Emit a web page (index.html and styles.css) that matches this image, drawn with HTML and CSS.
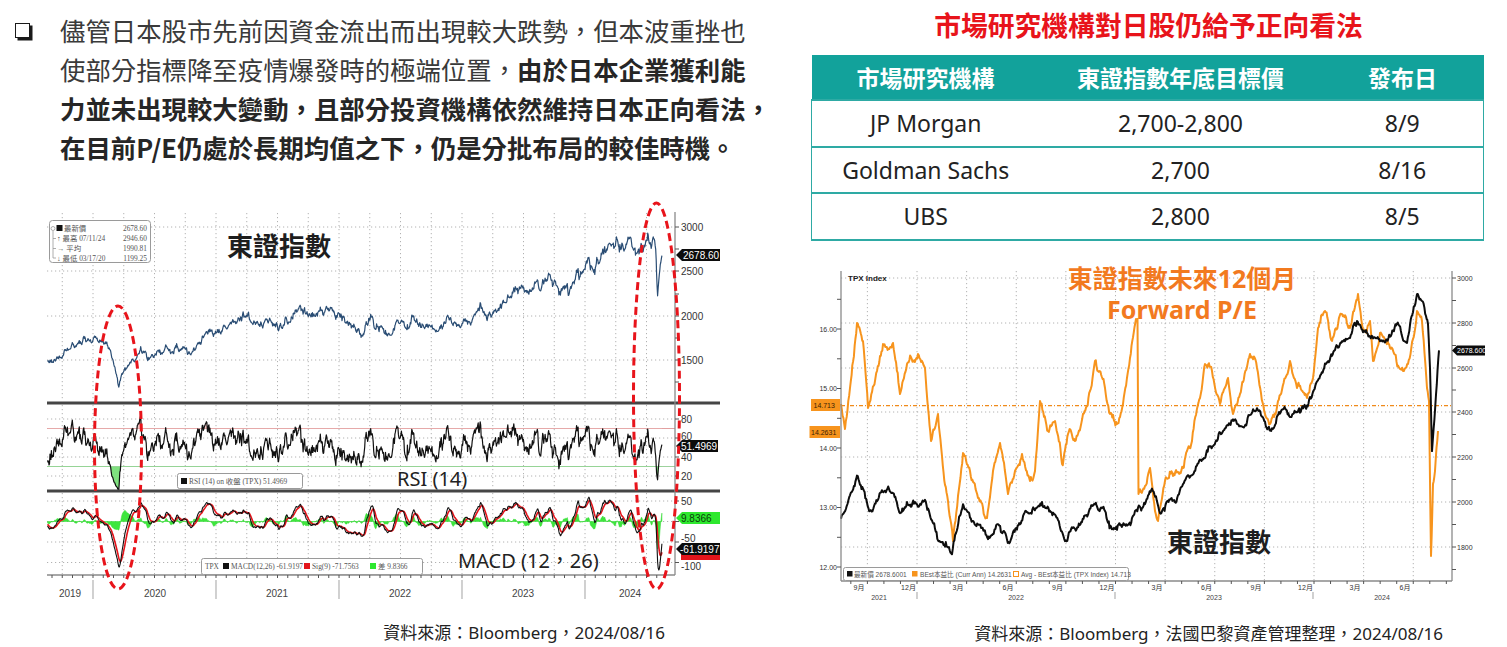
FILE: index.html
```html
<!DOCTYPE html>
<html lang="zh-Hant">
<head>
<meta charset="utf-8">
<title>日股觀點</title>
<link rel="stylesheet" href="styles.css">
</head>
<body>
<div class="page">
  <section class="col-left">
    <div class="bullet">
      <span class="checkbox"></span>
      <p class="bullet-text">儘管日本股市先前因資金流出而出現較大跌勢，但本波重挫也<br>使部分指標降至疫情爆發時的極端位置，<b>由於日本企業獲利能<br>力並未出現較大變動，且部分投資機構依然維持日本正向看法，<br>在目前P/E仍處於長期均值之下，仍是分批布局的較佳時機。</b></p>
    </div>

    <div class="chart-left">
      <svg class="svg-left" viewBox="40 198 685 404" xmlns="http://www.w3.org/2000/svg">
        <defs>
          <clipPath id="clipRsiLow"><rect x="47" y="466.5" width="628" height="23"/></clipPath>
          <clipPath id="clipRsiHigh"><rect x="47" y="406" width="628" height="22.5"/></clipPath>
        </defs>
        <g id="gridL"></g>
        <line class="ref-red" x1="47" x2="675" y1="428.5" y2="428.5"/>
        <line class="ref-green" x1="47" x2="675" y1="466.5" y2="466.5"/>
        <path id="rsiLow" class="fill-green" clip-path="url(#clipRsiLow)"/>
        <path id="rsiHigh" class="fill-red" clip-path="url(#clipRsiHigh)"/>
        <path id="macdHist" class="hist"/>
        <path id="priceL" class="line-price"/>
        <path id="rsiL" class="line-rsi"/>
        <path id="sigL" class="line-sig"/>
        <path id="macdL" class="line-macd"/>
        <line class="sep" x1="47" x2="720" y1="403" y2="403"/>
        <line class="sep" x1="47" x2="720" y1="491" y2="491"/>
        <line class="axis" x1="675" x2="675" y1="212" y2="575"/>
        <line class="axis" x1="47" x2="675" y1="575" y2="575"/>
        <g id="ticksL"></g>

        <g class="ax">
          <text x="681" y="230.5">3000</text>
          <text x="681" y="274.5">2500</text>
          <text x="681" y="319.5">2000</text>
          <text x="681" y="363.5">1500</text>
          <text x="681" y="422.5">80</text>
          <text x="681" y="440">60</text>
          <text x="681" y="460.5">40</text>
          <text x="681" y="479.5">20</text>
          <text x="681" y="504.5">50</text>
          <text x="681" y="541.5">-50</text>
          <text x="681" y="569.5">-100</text>
        </g>
        <g class="yr">
          <text x="70" y="597">2019</text>
          <text x="155" y="597">2020</text>
          <text x="277" y="597">2021</text>
          <text x="400" y="597">2022</text>
          <text x="523" y="597">2023</text>
          <text x="630" y="597">2024</text>
        </g>

        <g class="legend">
          <rect class="leg-box" x="49.5" y="220.5" width="101" height="42" rx="3"/>
          <path class="leg-tree" d="M53 231 V258 M53 238.5 H56 M53 248.5 H56 M53 258 H56"/>
          <circle class="leg-tree" cx="53" cy="228.5" r="2"/>
          <rect x="56.5" y="225" width="6" height="6" fill="#111"/>
          <text x="64" y="231">最新價</text><text class="num" x="147" y="231">2678.60</text>
          <text x="57" y="241">↑ 最高 07/11/24</text><text class="num" x="147" y="241">2946.60</text>
          <text x="57" y="251">→ 平均</text><text class="num" x="147" y="251">1990.81</text>
          <text x="57" y="261">↓ 最低 03/17/20</text><text class="num" x="147" y="261">1199.25</text>
        </g>

        <g class="legend">
          <rect class="leg-box" x="177.5" y="473.5" width="125" height="15" rx="2"/>
          <rect x="181" y="478" width="6" height="6" fill="#111"/>
          <text x="189" y="484">RSI (14)  on 收盤 (TPX) 51.4969</text>
        </g>
        <g class="legend">
          <rect class="leg-box" x="201.5" y="558.5" width="221" height="16" rx="2"/>
          <text x="205" y="569">TPX</text>
          <rect x="223" y="563" width="6" height="6" fill="#111"/>
          <text x="231" y="569">MACD(12,26) -61.9197</text>
          <rect x="304" y="563" width="6" height="6" fill="#e3141b"/>
          <text x="312" y="569">Sig(9) -71.7563</text>
          <rect x="370" y="563" width="6" height="6" fill="#2ee82e"/>
          <text x="378" y="569">差 9.8366</text>
        </g>

        <text class="big-label" x="227" y="256">東證指數</text>
        <text class="mid-label" x="397" y="486">RSI (14)</text>
        <text class="mid-label" x="458" y="568">MACD (12，26)</text>

        <path class="tag-black" d="M676 255 L682 249 H720 V261 H682 Z"/>
        <text class="tag-text" x="683" y="258.7">2678.60</text>
        <path class="tag-black" d="M676 446 L682 440 H718 V452 H682 Z"/>
        <text class="tag-text" x="681" y="449.7">51.4969</text>
        <path class="tag-green" d="M676 518 L682 512 H720 V524 H682 Z"/>
        <text class="tag-text dark" x="681" y="521.7">9.8366</text>
        <rect x="681" y="553" width="39" height="7" fill="#e3141b"/>
        <path class="tag-black" d="M676 549 L682 543 H720 V555 H682 Z"/>
        <text class="tag-text" x="680" y="552.7">-61.9197</text>

        <ellipse class="ring" cx="118" cy="447.5" rx="23.5" ry="141.5"/>
        <ellipse class="ring" cx="656.5" cy="396" rx="23" ry="193"/>
      </svg>
    </div>

    <p class="source source-left">資料來源：Bloomberg，2024/08/16</p>
  </section>

  <section class="col-right">
    <h2 class="title">市場研究機構對日股仍給予正向看法</h2>
    <table class="targets">
      <colgroup><col class="c1"><col class="c2"><col class="c3"></colgroup>
      <thead>
        <tr><th>市場研究機構</th><th>東證指數年底目標價</th><th>發布日</th></tr>
      </thead>
      <tbody>
        <tr><td>JP Morgan</td><td>2,700-2,800</td><td>8/9</td></tr>
        <tr><td>Goldman Sachs</td><td>2,700</td><td>8/16</td></tr>
        <tr><td>UBS</td><td>2,800</td><td>8/5</td></tr>
      </tbody>
    </table>

    <div class="chart-right">
      <svg class="svg-right" viewBox="805 252 690 350" xmlns="http://www.w3.org/2000/svg">
        <g id="gridR"></g>
        <line class="avg" x1="841" x2="1452" y1="404.6" y2="404.6"/>
        <path id="peR" class="line-pe"/>
        <path id="pxR" class="line-px"/>
        <line class="axis" x1="841" x2="841" y1="270" y2="580"/>
        <line class="axis" x1="1452" x2="1452" y1="270" y2="580"/>
        <line class="axis" x1="841" x2="1452" y1="580" y2="580"/>
        <g id="ticksR"></g>

        <text class="tpx" x="848" y="280">TPX Index</text>

        <g class="axs end">
          <text x="837" y="330.5">16.00</text>
          <text x="837" y="389.5">15.00</text>
          <text x="837" y="449.5">14.00</text>
          <text x="837" y="508.5">13.00</text>
          <text x="837" y="568.5">12.00</text>
        </g>
        <g class="axs">
          <text x="1457" y="279.5">3000</text>
          <text x="1457" y="324.5">2800</text>
          <text x="1457" y="369.5">2600</text>
          <text x="1457" y="413.5">2400</text>
          <text x="1457" y="458.5">2200</text>
          <text x="1457" y="503.5">2000</text>
          <text x="1457" y="548.5">1800</text>
        </g>
        <g class="axs mid">
          <text x="859" y="589">9月</text>
          <text x="908.5" y="589">12月</text>
          <text x="958" y="589">3月</text>
          <text x="1008" y="589">6月</text>
          <text x="1057.5" y="589">9月</text>
          <text x="1107" y="589">12月</text>
          <text x="1157" y="589">3月</text>
          <text x="1206.5" y="589">6月</text>
          <text x="1256" y="589">9月</text>
          <text x="1305.5" y="589">12月</text>
          <text x="1355" y="589">3月</text>
          <text x="1405" y="589">6月</text>
        </g>
        <g class="axs mid yrs">
          <text x="879" y="598.5">2021</text>
          <text x="1016" y="598.5">2022</text>
          <text x="1214" y="598.5">2023</text>
          <text x="1382" y="598.5">2024</text>
        </g>

        <path class="tag-orange" d="M811 398 H840 V410 H811 Z"/>
        <text class="tag-small" x="813.5" y="406.5">14.713</text>
        <path class="tag-orange" d="M809.5 425 H840 V437 H809.5 Z"/>
        <text class="tag-small" x="811" y="433.5">14.2631</text>
        <path class="tag-black" d="M1452 349.5 L1457 344.5 H1485 V354.5 H1457 Z"/>
        <text class="tag-small light" x="1457" y="352.3">2678.600</text>

        <g class="legend lg-r">
          <rect class="leg-box" x="843.5" y="566.5" width="285" height="13" rx="2"/>
          <rect x="847" y="570" width="5.5" height="5.5" fill="#111"/>
          <text x="854" y="576">最新價 2678.6001</text>
          <rect x="912" y="570" width="5.5" height="5.5" fill="#f7941d"/>
          <text x="920" y="576">BEst本益比 (Curr Ann) 14.2631</text>
          <rect x="1013.5" y="570.5" width="5" height="5" fill="#fff" stroke="#f7941d"/>
          <text x="1021" y="576">Avg - BEst本益比 (TPX Index) 14.713</text>
        </g>

        <text class="pe-title" x="1182" y="286.5">東證指數未來12個月</text>
        <text class="pe-title" x="1182" y="318">Forward P/E</text>
        <text class="big-label" x="1167" y="551">東證指數</text>
      </svg>
    </div>

    <p class="source source-right">資料來源：Bloomberg，法國巴黎資產管理整理，2024/08/16</p>
  </section>
</div>
<script src="script.js"></script>
</body>
</html>
```

FILE: styles.css
```css
* { box-sizing: border-box; }
html, body { margin: 0; padding: 0; }
body {
  width: 1507px;
  height: 647px;
  overflow: hidden;
  background: #fff;
  color: #222;
  font-family: "Noto Sans", "Noto Sans CJK TC", sans-serif;
}
.page {
  display: grid;
  grid-template-columns: 790px 717px;
  height: 647px;
}
.col-left, .col-right { display: flex; flex-direction: column; }

/* bullet text */
.bullet { display: flex; align-items: flex-start; padding: 11px 0 0 15px; }
.checkbox {
  flex: none;
  width: 15px;
  height: 15px;
  margin: 12px 30px 0 0;
  border: 1.5px solid #1a1a1a;
  box-shadow: 2.5px 2.5px 0 #1a1a1a;
  background: #fff;
}
.bullet-text {
  margin: 0;
  font-family: "Noto Sans CJK TC", "Noto Sans", sans-serif;
  font-size: 25.4px;
  line-height: 39px;
  color: #3a3a3a;
  white-space: nowrap;
}
.bullet-text b { font-weight: 700; color: #262626; }

/* charts */
.chart-left { margin-top: 31px; }
.svg-left { display: block; width: 685px; height: 404px; margin-left: 40px; }
.chart-right { margin-top: 12px; }
.svg-right { display: block; width: 690px; height: 350px; margin-left: 15px; }

.dot { stroke: #a9a9a9; stroke-width: 0.9; stroke-dasharray: 1.2 2.8; fill: none; }
.sep { stroke: #454545; stroke-width: 3; }
.axis { stroke: #8a8a8a; stroke-width: 1.3; }
.tick { stroke: #555; stroke-width: 1; }
.ysep { stroke: #bdbdbd; stroke-width: 1.4; }
.ref-red { stroke: #e2a0a0; stroke-width: 1.2; }
.ref-green { stroke: #9ed19e; stroke-width: 1.2; }
.fill-green { fill: #7fe07f; stroke: none; }
.fill-red { fill: #f3c4c4; stroke: none; }
.hist { fill: #3ee63e; stroke: #2fd82f; stroke-width: 0.5; }
.line-price { fill: none; stroke: #2a4d74; stroke-width: 1.2; stroke-linejoin: round; }
.line-rsi { fill: none; stroke: #111; stroke-width: 1.2; stroke-linejoin: round; }
.line-sig { fill: none; stroke: #e3141b; stroke-width: 1.6; stroke-linejoin: round; }
.line-macd { fill: none; stroke: #111; stroke-width: 1.1; stroke-linejoin: round; }
.line-pe { fill: none; stroke: #f7941d; stroke-width: 2; stroke-linejoin: round; }
.line-px { fill: none; stroke: #0d0d0d; stroke-width: 2; stroke-linejoin: round; }
.avg { stroke: #f08a1a; stroke-width: 1.2; stroke-dasharray: 4 2 1 2; }
.ring { fill: none; stroke: #e8141b; stroke-width: 3; stroke-dasharray: 8 4.5; }

.ax text { font-family: "Liberation Sans", sans-serif; font-size: 10px; fill: #333; }
.yr text { font-family: "Liberation Sans", sans-serif; font-size: 10px; fill: #444; text-anchor: middle; }
.axs text { font-family: "Liberation Sans", "Noto Sans CJK TC", sans-serif; font-size: 7px; fill: #333; }
.axs.end text { text-anchor: end; }
.axs.mid text { text-anchor: middle; }
.axs.yrs text { fill: #444; }
.tpx { font-family: "Liberation Sans", sans-serif; font-size: 8px; font-weight: 700; fill: #222; }

.legend text { font-family: "Liberation Serif", "Noto Sans CJK TC", serif; font-size: 7.4px; fill: #555; }
.legend text.num { text-anchor: end; }
.lg-r text { font-size: 6.6px; font-family: "Liberation Sans", "Noto Sans CJK TC", sans-serif; }
.leg-box { fill: #fff; stroke: #9a9a9a; stroke-width: 1; }
.leg-tree { fill: none; stroke: #999; stroke-width: 0.8; }

.big-label { font-family: "Noto Sans CJK TC", sans-serif; font-size: 26px; font-weight: 700; fill: #1e1e1e; }
.mid-label { font-family: "Noto Sans", "Noto Sans CJK TC", sans-serif; font-size: 20px; fill: #222; }
.pe-title { font-family: "Noto Sans", "Noto Sans CJK TC", sans-serif; font-size: 25px; font-weight: 700; fill: #f27a1f; text-anchor: middle; }

.tag-black { fill: #0c0c0c; }
.tag-green { fill: #2ee82e; }
.tag-orange { fill: #f7941d; }
.tag-text { font-family: "Liberation Sans", sans-serif; font-size: 10px; fill: #fff; }
.tag-text.dark { fill: #0b3d0b; }
.tag-small { font-family: "Liberation Sans", sans-serif; font-size: 7px; fill: #3a2205; }
.tag-small.light { fill: #fff; }

/* right column */
.title {
  margin: 10px 0 0;
  font-family: "Noto Sans CJK TC", sans-serif;
  font-size: 26.8px;
  line-height: 30px;
  font-weight: 700;
  color: #e8141b;
  text-align: center;
}
.targets {
  margin: 15px 0 0 21px;
  width: 672px;
  border-collapse: collapse;
  table-layout: fixed;
  font-size: 23px;
}
.targets col.c1 { width: 228px; }
.targets col.c2 { width: 282px; }
.targets col.c3 { width: 162px; }
.targets th {
  height: 45px;
  padding: 0;
  background: #12a29b;
  color: #fff;
  font-family: "Noto Sans CJK TC", sans-serif;
  font-weight: 700;
}
.targets td {
  height: 46.5px;
  padding: 0;
  text-align: center;
  color: #222;
  border-top: 2px solid #2eaaa4;
}
.targets tr:last-child td { border-bottom: 2px solid #2eaaa4; }
.targets td:first-child { border-left: 1px solid #2eaaa4; }
.targets td:last-child { border-right: 1px solid #2eaaa4; }

.source {
  margin: 19px 0 0;
  font-family: "Noto Sans", "Noto Sans CJK TC", sans-serif;
  font-size: 17px;
  line-height: 24px;
  color: #222;
  text-align: right;
  white-space: nowrap;
}
.source-left { padding-right: 125px; }
.source-right { padding-right: 64px; }
```

FILE: script.js
```js
(function () {
  var NS = 'http://www.w3.org/2000/svg';
  function el(parent, tag, attrs) {
    var e = document.createElementNS(NS, tag);
    for (var k in attrs) e.setAttribute(k, attrs[k]);
    parent.appendChild(e);
    return e;
  }
  var seed = 20240816;
  function rand() {
    seed |= 0; seed = seed + 0x6D2B79F5 | 0;
    var t = Math.imul(seed ^ seed >>> 15, 1 | seed);
    t = t + Math.imul(t ^ t >>> 7, 61 | t) ^ t;
    return ((t ^ t >>> 14) >>> 0) / 4294967296;
  }
  function gauss() {
    var u = 0; while (u === 0) u = rand();
    return Math.sqrt(-2 * Math.log(u)) * Math.cos(2 * Math.PI * rand());
  }
  /* Brownian bridge through anchor points */
  function bridge(anchors, dx, sig) {
    var pts = [[anchors[0][0], anchors[0][1]]];
    for (var i = 0; i < anchors.length - 1; i++) {
      var a = anchors[i], b = anchors[i + 1];
      var n = Math.max(1, Math.round((b[0] - a[0]) / dx));
      var s = typeof sig === 'function' ? sig(a[1]) : sig;
      var w = [0];
      for (var k = 1; k <= n; k++) w.push(w[k - 1] + gauss() * s);
      for (k = 1; k <= n; k++) {
        var f = k / n;
        pts.push([a[0] + (b[0] - a[0]) * f, a[1] + (b[1] - a[1]) * f + w[k] - w[n] * f]);
      }
    }
    return pts;
  }
  function pathD(pts) {
    return 'M' + pts.map(function (p) { return p[0].toFixed(1) + ' ' + p[1].toFixed(1); }).join('L');
  }

  /* ---------------- left chart ---------------- */
  var gL = document.getElementById('gridL');
  [227, 271, 316, 360, 419, 438, 457, 476, 501, 521.5, 542, 562.5].forEach(function (y) {
    el(gL, 'line', { x1: 47, x2: 675, y1: y, y2: y, 'class': 'dot' });
  });
  for (var q = -1; q <= 18; q++) {
    var gx = 93 + q * 30.75;
    if (gx < 47 || gx > 675) continue;
    [[213, 401], [405, 489], [493, 575]].forEach(function (s) {
      el(gL, 'line', { x1: gx, x2: gx, y1: s[0], y2: s[1], 'class': 'dot' });
    });
  }
  var tL = document.getElementById('ticksL');
  [227, 249, 271, 294, 316, 338, 360, 382, 419, 438, 457, 476, 501, 521.5, 542, 562.5].forEach(function (y) {
    el(tL, 'line', { x1: 675, x2: 679, y1: y, y2: y, 'class': 'tick' });
  });
  for (var m = -5; m <= 55; m++) {
    var mx = 93 + m * 123 / 12;
    if (mx < 47 || mx > 675) continue;
    el(tL, 'line', { x1: mx, x2: mx, y1: 575, y2: 578, 'class': 'tick' });
  }
  [93, 216, 339, 462, 585].forEach(function (x) {
    el(tL, 'line', { x1: x, x2: x, y1: 580, y2: 599, 'class': 'ysep' });
  });

  function tx(t) { return 93 + (t - 2020) * 123; }
  function py(p) { return 316 - (p - 2000) * 0.089; }
  var LA = [
    [2019.10, 1600], [2019.20, 1610], [2019.30, 1620], [2019.42, 1550], [2019.50, 1570], [2019.58, 1560],
    [2019.63, 1500], [2019.67, 1480], [2019.72, 1520], [2019.80, 1620], [2019.88, 1690], [2019.95, 1720],
    [2020.00, 1730], [2020.05, 1700], [2020.10, 1710], [2020.14, 1620], [2020.17, 1450], [2020.21, 1200],
    [2020.23, 1330], [2020.26, 1420], [2020.30, 1480], [2020.36, 1560], [2020.42, 1600], [2020.47, 1540],
    [2020.55, 1570], [2020.62, 1620], [2020.70, 1600], [2020.78, 1600], [2020.86, 1700], [2020.93, 1800],
    [2021.00, 1810], [2021.08, 1870], [2021.14, 1950], [2021.20, 1990], [2021.28, 1940], [2021.36, 1900],
    [2021.44, 1960], [2021.52, 1900], [2021.60, 1930], [2021.68, 2110], [2021.74, 2050], [2021.80, 2000],
    [2021.88, 2040], [2021.97, 1990], [2022.02, 2000], [2022.08, 1900], [2022.18, 1760], [2022.25, 1950],
    [2022.33, 1880], [2022.45, 1840], [2022.52, 1930], [2022.60, 1990], [2022.68, 1900], [2022.76, 1860],
    [2022.88, 2000], [2022.96, 1900], [2023.05, 1940], [2023.14, 2060], [2023.20, 1970], [2023.28, 2040],
    [2023.36, 2150], [2023.45, 2310], [2023.52, 2280], [2023.58, 2310], [2023.66, 2400], [2023.72, 2430],
    [2023.80, 2235], [2023.90, 2380], [2024.00, 2520], [2024.12, 2610], [2024.18, 2740], [2024.23, 2820],
    [2024.28, 2720], [2024.39, 2760], [2024.46, 2800], [2024.51, 2930], [2024.55, 2860], [2024.575, 2750],
    [2024.59, 2227], [2024.60, 2400], [2024.625, 2678.6]
  ].map(function (a) { return [tx(a[0]), a[1]]; });
  var lp = bridge(LA, 0.5, function (p) { return p * 0.0115; });

  var rsi = [], macd = [], sig = [];
  var ag = 0, al = 0, e12 = lp[0][1], e26 = lp[0][1], s9 = 0;
  for (var i = 0; i < lp.length; i++) {
    var p = lp[i][1];
    if (i > 0) {
      var ch = p - lp[i - 1][1];
      var g = ch > 0 ? ch : 0, l = ch < 0 ? -ch : 0;
      if (i <= 14) { ag += g / 14; al += l / 14; } else { ag = (ag * 13 + g) / 14; al = (al * 13 + l) / 14; }
    }
    rsi.push(al === 0 ? 50 : 100 - 100 / (1 + ag / al));
    e12 += (p - e12) * 2 / 13;
    e26 += (p - e26) * 2 / 27;
    var mv = e12 - e26;
    s9 += (mv - s9) * 2 / 10;
    macd.push(mv); sig.push(s9);
  }
  var vis = [];
  for (i = 0; i < lp.length; i++) if (lp[i][0] >= 47) vis.push(i);
  function ry(r) { return 476 - (r - 20) * 0.95; }
  function my(v) { return 521.5 - v * 0.41; }
  document.getElementById('priceL').setAttribute('d', pathD(vis.map(function (j) { return [lp[j][0], py(lp[j][1])]; })));
  var rsiPts = vis.map(function (j) { return [lp[j][0], ry(rsi[j])]; });
  document.getElementById('rsiL').setAttribute('d', pathD(rsiPts));
  var x0 = rsiPts[0][0], xn = rsiPts[rsiPts.length - 1][0];
  document.getElementById('rsiLow').setAttribute('d', 'M' + x0 + ' 466.5' + pathD(rsiPts).replace('M', 'L') + 'L' + xn + ' 466.5Z');
  document.getElementById('rsiHigh').setAttribute('d', 'M' + x0 + ' 428.5' + pathD(rsiPts).replace('M', 'L') + 'L' + xn + ' 428.5Z');
  document.getElementById('macdL').setAttribute('d', pathD(vis.map(function (j) { return [lp[j][0], my(macd[j])]; })));
  document.getElementById('sigL').setAttribute('d', pathD(vis.map(function (j) { return [lp[j][0], my(sig[j])]; })));
  var histPts = vis.map(function (j) { return [lp[j][0], my(macd[j] - sig[j])]; });
  document.getElementById('macdHist').setAttribute('d', 'M' + x0 + ' 521.5' + pathD(histPts).replace('M', 'L') + 'L' + xn + ' 521.5Z');

  /* ---------------- right chart ---------------- */
  var gR = document.getElementById('gridR');
  [277, 322, 367, 411, 456, 501, 546].forEach(function (y) {
    el(gR, 'line', { x1: 841, x2: 1452, y1: y, y2: y, 'class': 'dot' });
  });
  for (q = -1; q <= 10; q++) {
    gx = 917 + q * 49.625;
    el(gR, 'line', { x1: gx, x2: gx, y1: 270, y2: 580, 'class': 'dot' });
  }
  var tR = document.getElementById('ticksR');
  [277, 299.5, 322, 344.5, 367, 389, 411, 433.5, 456, 478.5, 501, 523.5, 546, 568.5].forEach(function (y) {
    el(tR, 'line', { x1: 1452, x2: 1456, y1: y, y2: y, 'class': 'tick' });
  });
  [298.3, 328, 357.8, 387.5, 417.3, 447, 476.8, 506.5, 536.3, 566].forEach(function (y) {
    el(tR, 'line', { x1: 837, x2: 841, y1: y, y2: y, 'class': 'tick' });
  });
  for (m = -5; m <= 32; m++) {
    mx = 917 + m * 198.5 / 12;
    if (mx < 841 || mx > 1452) continue;
    el(tR, 'line', { x1: mx, x2: mx, y1: 580, y2: 583, 'class': 'tick' });
  }
  [917, 1115, 1313].forEach(function (x) {
    el(tR, 'line', { x1: x, x2: x, y1: 591, y2: 598, 'class': 'ysep' });
  });

  function rpy(p) { return 501 - (p - 2000) * 0.22333; }
  var RB = [
    [841, 1925], [850, 2030], [857, 2118], [863, 2060], [870, 1960], [878, 2010], [885, 2050], [893, 2040],
    [900, 1950], [907, 2000], [917, 1990], [925, 2010], [935, 1880], [945, 1800], [952, 1766], [963, 1990],
    [970, 1930], [978, 1900], [988, 1834], [997, 1900], [1004, 1870], [1010, 1820], [1020, 1900], [1030, 1950],
    [1042, 2000], [1050, 1960], [1058, 1920], [1065, 1825], [1075, 1880], [1085, 1940], [1095, 1990], [1105, 1960],
    [1111, 1890], [1117, 1875], [1125, 1900], [1135, 1960], [1145, 1990], [1152, 2060], [1160, 1950], [1170, 2010],
    [1183, 2080], [1192, 2120], [1200, 2190], [1210, 2250], [1217, 2273], [1225, 2330], [1233, 2370], [1240, 2340],
    [1250, 2390], [1257, 2420], [1265, 2360], [1272, 2330], [1283, 2415], [1290, 2380], [1300, 2400], [1310, 2470],
    [1317, 2540], [1325, 2620], [1335, 2680], [1345, 2720], [1350, 2735], [1357, 2810], [1363, 2760], [1370, 2740],
    [1380, 2720], [1390, 2740], [1397, 2798], [1407, 2712], [1413, 2850], [1417, 2930], [1422, 2900], [1426, 2833],
    [1428, 2797], [1430, 2600], [1432, 2228], [1436, 2480], [1439, 2678.6]
  ].map(function (a) { return [a[0], rpy(a[1])]; });
  var RO = [
    [841, 403], [845, 428], [850, 387], [857, 322], [863, 340], [868, 407], [877, 370], [883, 343], [893, 342],
    [900, 393], [907, 363], [918, 353], [925, 367], [931, 440], [938, 413], [942, 455], [948, 500], [953, 540],
    [958, 495], [963, 452], [970, 470], [978, 497], [987, 517], [993, 470], [1000, 442], [1008, 493], [1015, 470],
    [1022, 453], [1030, 480], [1035, 470], [1040, 400], [1048, 430], [1055, 420], [1062, 463], [1068, 433],
    [1075, 440], [1083, 413], [1090, 390], [1095, 360], [1105, 387], [1110, 413], [1117, 423], [1123, 403],
    [1130, 357], [1136, 318], [1137.5, 318], [1138.5, 493], [1145, 485], [1150, 467], [1155, 510], [1158, 520],
    [1165, 480], [1173, 475], [1183, 467], [1187, 450], [1192, 440], [1200, 397], [1205, 363], [1212, 370],
    [1220, 403], [1228, 377], [1233, 413], [1240, 393], [1250, 353], [1257, 367], [1265, 413], [1270, 423],
    [1278, 400], [1290, 360], [1297, 387], [1307, 397], [1313, 377], [1318, 327], [1325, 310], [1332, 340],
    [1342, 313], [1350, 327], [1358, 293], [1363, 330], [1370, 320], [1373, 360], [1380, 332], [1390, 347],
    [1403, 370], [1408, 363], [1417, 310], [1422, 320], [1427, 387], [1429, 400], [1431, 555], [1433, 483],
    [1435, 470], [1438, 430]
  ];
  document.getElementById('pxR').setAttribute('d', pathD(bridge(RB, 0.8, 1.8)));
  document.getElementById('peR').setAttribute('d', pathD(bridge(RO, 0.8, 2.0)));
})();
```
